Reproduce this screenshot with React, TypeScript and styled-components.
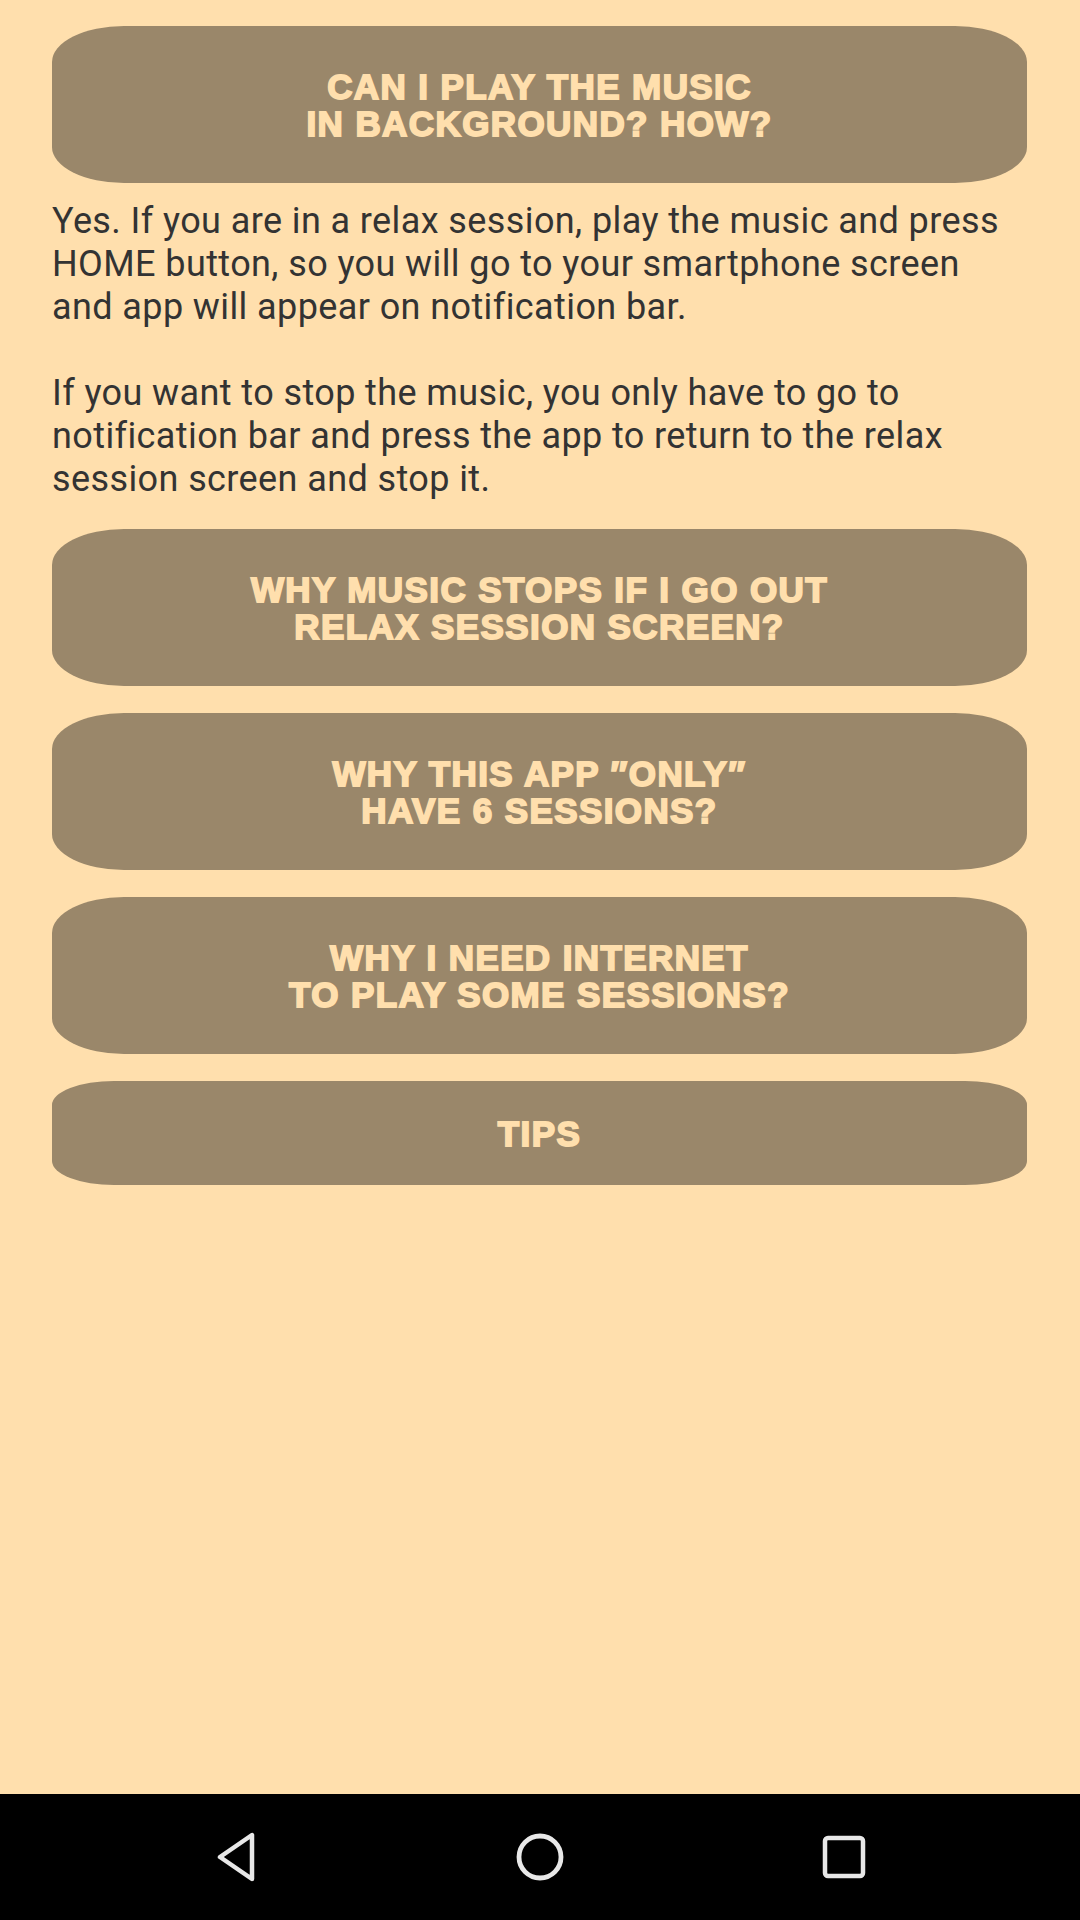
import React from "react";
import styled, { createGlobalStyle } from "styled-components";

const GlobalStyle = createGlobalStyle`
  html, body {
    margin: 0;
    padding: 0;
    background: #ffdfad;
  }
  * { box-sizing: border-box; }
`;

const Page = styled.div`
  width: 1080px;
  height: 1920px;
  display: flex;
  flex-direction: column;
  background: #ffdfad;
  overflow: hidden;
`;

const Content = styled.main`
  flex: 1;
  display: flex;
  flex-direction: column;
  gap: 27px;
  padding: 26px 53px 0 52px;
`;

const QuestionButton = styled.button<{ $compact?: boolean }>`
  width: 100%;
  height: ${(p) => (p.$compact ? "104px" : "157px")};
  flex-shrink: 0;
  border: none;
  border-radius: ${(p) => (p.$compact ? "62px / 24px" : "72px / 36px")};
  background: #9a876a;
  color: #ffdfad;
  font-family: "Liberation Sans", Arial, sans-serif;
  font-weight: bold;
  font-size: 35px;
  letter-spacing: 1.4px;
  line-height: 37px;
  -webkit-text-stroke: 1.8px #ffdfad;
  text-transform: uppercase;
  text-align: center;
  display: flex;
  align-items: center;
  justify-content: center;
  padding: 0 40px;
  cursor: pointer;
`;

const QuestionText = styled.span`
  display: block;
  white-space: pre-line;
`;

const Answer = styled.div`
  margin-top: -10px;
  margin-bottom: 1px;
  font-family: Roboto, "Noto Sans", sans-serif;
  font-size: 36px;
  letter-spacing: 0.4px;
  line-height: 43px;
  color: #333333;
`;

const Paragraph = styled.p`
  margin: 0;
  & + & {
    margin-top: 43px;
  }
`;

const NavBar = styled.nav`
  height: 126px;
  flex-shrink: 0;
  background: #000000;
  display: flex;
  align-items: center;
  justify-content: center;
  gap: 224px;
`;

const NavSlot = styled.div`
  width: 80px;
  height: 80px;
  display: flex;
  align-items: center;
  justify-content: center;
`;

const BackIcon = () => (
  <svg width="42" height="50" viewBox="0 0 42 50" fill="none">
    <path
      d="M37 3 L37 47 L5 25 Z"
      stroke="#e8e8e8"
      strokeWidth="4.5"
      strokeLinejoin="round"
    />
  </svg>
);

const HomeIcon = () => (
  <svg width="50" height="50" viewBox="0 0 50 50" fill="none">
    <circle cx="25" cy="25" r="21" stroke="#e8e8e8" strokeWidth="4.8" />
  </svg>
);

const RecentsIcon = () => (
  <svg width="44" height="44" viewBox="0 0 44 44" fill="none">
    <rect
      x="3"
      y="3"
      width="38"
      height="38"
      rx="3"
      stroke="#e8e8e8"
      strokeWidth="4.5"
    />
  </svg>
);

const questions = [
  "Why music stops if I go out\nrelax session screen?",
  "Why this app \u2033only\u2033\nhave 6 sessions?",
  "Why I need internet\nto play some sessions?",
];

export default function App() {
  return (
    <>
      <GlobalStyle />
      <Page>
        <Content>
          <QuestionButton>
            <QuestionText>{"Can I play the music\nin background? How?"}</QuestionText>
          </QuestionButton>
          <Answer>
            <Paragraph>
              Yes. If you are in a relax session, play the music and press HOME
              button, so you will go to your smartphone screen and app will
              appear on notification bar.
            </Paragraph>
            <Paragraph>
              If you want to stop the music, you only have to go to
              notification bar and press the app to return to the relax session
              screen and stop it.
            </Paragraph>
          </Answer>
          {questions.map((q) => (
            <QuestionButton key={q}>
              <QuestionText>{q}</QuestionText>
            </QuestionButton>
          ))}
          <QuestionButton $compact>
            <QuestionText>Tips</QuestionText>
          </QuestionButton>
        </Content>
        <NavBar>
          <NavSlot>
            <BackIcon />
          </NavSlot>
          <NavSlot>
            <HomeIcon />
          </NavSlot>
          <NavSlot>
            <RecentsIcon />
          </NavSlot>
        </NavBar>
      </Page>
    </>
  );
}
